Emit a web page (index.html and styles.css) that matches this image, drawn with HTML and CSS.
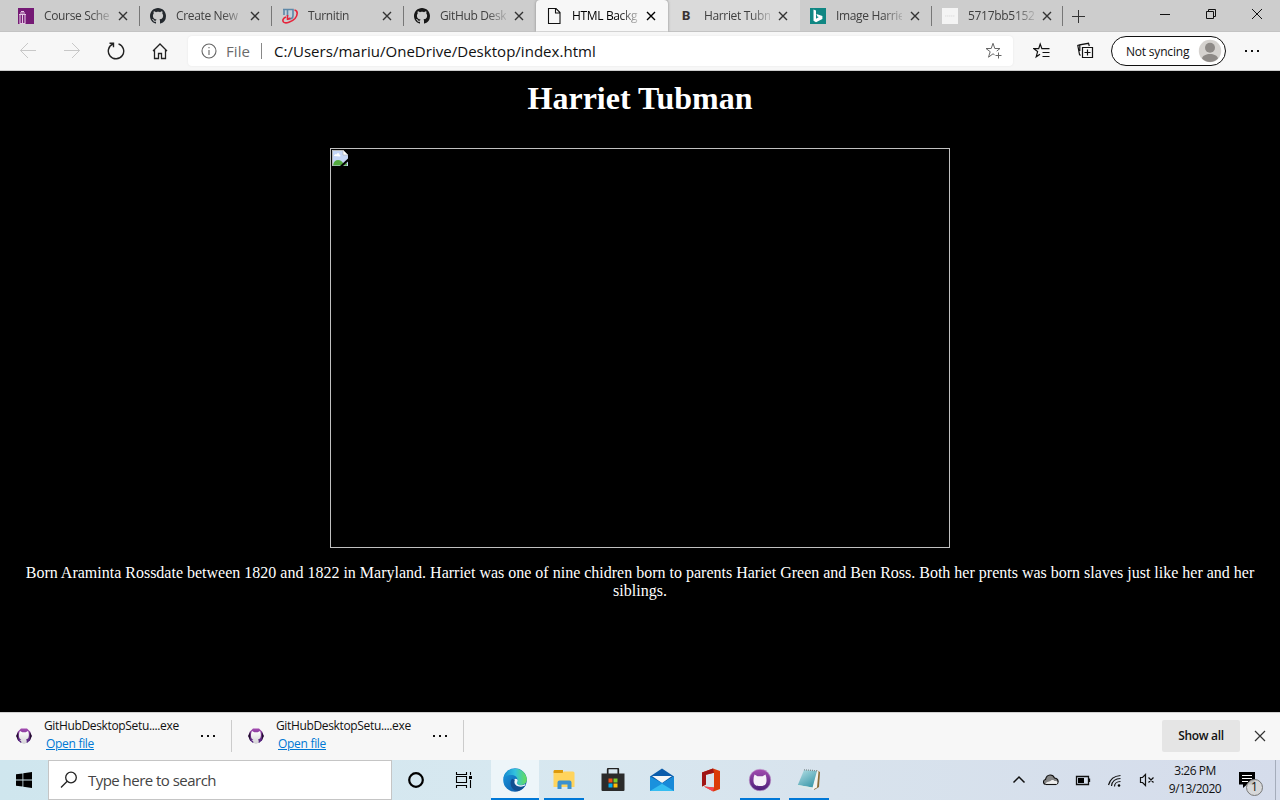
FILE: index.html
```html
<!DOCTYPE html>
<html lang="en">
<head>
<meta charset="utf-8">
<title>HTML Background</title>
<link rel="stylesheet" href="styles.css">
</head>
<body>
<svg class="defs" aria-hidden="true">
  <defs>
    <symbol id="x" viewBox="0 0 10 10"><path d="M1 1l8 8M9 1L1 9" fill="none" stroke="currentColor" stroke-width="1.4"/></symbol>
    <symbol id="octocat" viewBox="0 0 16 16"><path d="M8 0C3.58 0 0 3.58 0 8c0 3.54 2.29 6.53 5.47 7.59.4.07.55-.17.55-.38 0-.19-.01-.82-.01-1.49-2.01.37-2.53-.49-2.69-.94-.09-.23-.48-.94-.82-1.13-.28-.15-.68-.52-.01-.53.63-.01 1.08.58 1.23.82.72 1.21 1.87.87 2.33.66.07-.52.28-.87.51-1.07-1.78-.2-3.64-.89-3.64-3.95 0-.87.31-1.59.82-2.15-.08-.2-.36-1.02.08-2.12 0 0 .67-.21 2.2.82.64-.18 1.32-.27 2-.27.68 0 1.36.09 2 .27 1.53-1.04 2.2-.82 2.2-.82.44 1.1.16 1.92.08 2.12.51.56.82 1.27.82 2.15 0 3.07-1.87 3.75-3.65 3.95.29.25.54.73.54 1.48 0 1.07-.01 1.93-.01 2.2 0 .21.15.46.55.38A8.013 8.013 0 0016 8c0-4.42-3.58-8-8-8z" fill="currentColor"/></symbol>
    <symbol id="dots" viewBox="0 0 16 4"><path d="M1 1h2v2H1zM7 1h2v2H7zM13 1h2v2h-2z" fill="currentColor"/></symbol>
    <linearGradient id="purple" x1="0" y1="0" x2="0" y2="1"><stop offset="0" stop-color="#a34bb0"/><stop offset="1" stop-color="#4b1f78"/></linearGradient>
    <linearGradient id="cat" x1="0" y1="0" x2="0" y2="1"><stop offset="0" stop-color="#fff"/><stop offset="1" stop-color="#d2d0d4"/></linearGradient>
    <symbol id="desktop-app" viewBox="0 0 16 16"><path d="M5 .5h6L14 3.500 15.800 8 14 12.500 11 15H5L2 12.500.2 8 2 3.500z" fill="url(#purple)"/><path d="M.2 8L2.200 3.500v9zM15.800 8l-2-4.500v9z" fill="#24102f"/><path d="M4 3l2.300 1.300h3.400L12 3c.8 1.500 1.300 4.500.5 6.500-.4 1-1.300 1.600-2.300 1.800.4 1 .6 2 .6 3.500L8 16l-2.800-1.200v-1.500L3.500 12l1.900-.3c-1.200-.3-1.900-1.200-2.200-2.200C2.700 7.500 3 4.500 4 3z" fill="url(#cat)"/></symbol>
  </defs>
</svg>

<header class="tabs">
  <div class="tab"><svg class="fav" viewBox="0 0 16 16"><path fill="#751a75" d="M0 0h16v16H0z"/><path d="M1 6.500h7M1.500 15.500h6M2 7v8M4.500 7v8M7 7v8M2 5h5M3 3.500h3" stroke="#e4c8e4" stroke-width="1.100"/></svg><span class="label">Course Sche</span><svg class="close"><use href="#x"/></svg></div>
  <div class="tab"><svg class="fav git"><use href="#octocat"/></svg><span class="label">Create New</span><svg class="close"><use href="#x"/></svg></div>
  <div class="tab"><svg class="fav" viewBox="0 0 16 16"><path d="M2 1.500h9v6c0 2.200-1.500 3.500-4 3.500H6V7.500H2z" fill="#c3d0da"/><path d="M1 1.500h10v6c0 2.200-1.500 3.500-4 3.500M2 1.500V7M5.500 2v6" fill="none" stroke="#5d88a8" stroke-width="1.600"/><path d="M12.500 2c3.500.5 3.500 5 .5 8.500-3 3.300-9.500 5.600-11.500 3.500C0 12.300 1.500 10 4 9M5.500 7v5M5.500 11.500L8.500 10" fill="none" stroke="#e5243b" stroke-width="1.600"/></svg><span class="label">Turnitin</span><svg class="close"><use href="#x"/></svg></div>
  <div class="tab plain"><svg class="fav octo"><use href="#octocat"/></svg><span class="label">GitHub Desk</span><svg class="close"><use href="#x"/></svg></div>
  <div class="tab active"><svg class="fav" viewBox="0 0 16 16"><path d="M2.500.5h7.500l4 4v11H2.500zM9.500.5V5H14" fill="none" stroke="#111" stroke-width="1.100"/></svg><span class="label">HTML Backg</span><svg class="close"><use href="#x"/></svg></div>
  <div class="tab hover"><span class="fav bold-b">B</span><span class="label">Harriet Tubm</span><svg class="close"><use href="#x"/></svg></div>
  <div class="tab"><svg class="fav" viewBox="0 0 16 16"><path fill="#108783" d="M0 0h16v16H0z"/><path d="M3.500 1.500L6 2.500v8.200l2.800-1.600-1.500-.7-.9-2.500 6 2.200v2.800L6 14.200l-2.500-1.500z" fill="#fff"/></svg><span class="label">Image Harrie</span><svg class="close"><use href="#x"/></svg></div>
  <div class="tab last"><svg class="fav" viewBox="0 0 16 16"><path fill="#f4f4f4" d="M0 0h16v16H0z"/><path d="M3 8h10" stroke="#ddd" stroke-dasharray="1.500 .5"/></svg><span class="label digits">5717bb5152</span><svg class="close"><use href="#x"/></svg></div>
  <svg class="new-tab" viewBox="0 0 14 14"><path d="M7.500 1v13M1 7.500h13" stroke="#333"/></svg>
  <div class="window-controls">
    <svg viewBox="0 0 12 12"><path d="M1 6.500h10" stroke="#111"/></svg>
    <svg viewBox="0 0 12 12"><path d="M1.500 3.500h7v7h-7zM3.500 3V1.500h7v7H9" fill="none" stroke="#111"/></svg>
    <svg viewBox="0 0 12 12"><path d="M1 1l10 10M11 1L1 11" stroke="#111"/></svg>
  </div>
</header>

<nav class="toolbar">
  <div class="nav-buttons">
    <svg class="off" viewBox="0 0 18 18"><path d="M17 8.500H1.500M9 1L1.500 8.500 9 16"/></svg>
    <svg class="off" viewBox="0 0 18 18"><path d="M1 8.500h15.500M9 1l7.500 7.500L9 16"/></svg>
    <svg viewBox="0 0 18 18"><path d="M11.500 1.800A7.700 7.700 0 1 1 6 2L3 4.300M2.500 1.300h4v4" stroke-width="1.400"/></svg>
    <svg viewBox="0 0 18 18"><path d="M2 9l7-7 7 7M3.500 8v8.500h4v-5h3v5h4V8" stroke-width="1.300"/></svg>
  </div>
  <div class="address">
    <svg class="info" viewBox="0 0 16 16"><circle cx="8" cy="8" r="7"/><path d="M8 7v5M8 4v1.300"/></svg>
    <span class="scheme">File</span><span class="bar"></span><span class="url">C:/Users/mariu/OneDrive/Desktop/index.html</span>
    <svg class="star" viewBox="0 0 18 18"><path d="M9.500 12.700L8 11.800l-4.500 3.400 1.700-5.500L1 6.500h5.200L8 1.300l1.800 5.200H15l-3.300 2.600M13.500 10.500v6M10.500 13.500h6"/></svg>
  </div>
  <div class="actions">
    <svg viewBox="0 0 18 18"><path d="M7 12.200l-3.800 2.600 1.400-5.200-3.800-3h4.900L7.200 2l1.700 4.600h7.600M9.500 10.500h7M9.500 14.500h7"/></svg>
    <svg viewBox="0 0 18 18"><path d="M5.500 5.500h10v10h-10zM10.500 7.500v6M7.500 10.500h6M3.500 13.500L2.500 12.500.8 3.500l2-.6M2.800 9V2.800l8.700-1.500.8 2.700"/></svg>
  </div>
  <div class="profile"><span>Not syncing</span><svg viewBox="0 0 24 24"><circle cx="12" cy="12" r="11.200" fill="#d5d2cf"/><circle cx="12" cy="8.700" r="5" fill="#8e8a87"/><path d="M4 19.500c1-6 15-6 16 0a11 11 0 0 1-16 0z" fill="#8e8a87"/></svg></div>
  <svg class="menu"><use href="#dots"/></svg>
</nav>

<main class="page">
  <h1>Harriet Tubman</h1>
  <div class="picture"><svg viewBox="0 0 16 16"><path d="M0 0h11l5 5v11H0z" fill="#c4d5f5"/><path d="M.5 16V.5H11" fill="none" stroke="#b8b8b8"/><path d="M11 0l5 5h-5z" fill="#fff" stroke="#aaa" stroke-width=".6"/><path d="M2 6c0-2 2-2 2.500-1.500C5 2.500 8 3 7.500 5 9 5 8.500 6.500 8 6.500z" fill="#fff"/><path d="M1 15.500c1-7 8-7 11-1l3-1.500v2.500z" fill="#53a93f"/><path d="M8 16l8-7.500v3L11 16z" fill="#000"/></svg></div>
  <p>Born Araminta Rossdate between 1820 and 1822 in Maryland. Harriet was one of nine chidren born to parents Hariet Green and Ben Ross. Both her prents was born slaves just like her and her siblings.</p>
</main>

<section class="downloads">
  <div class="download"><svg class="app"><use href="#desktop-app"/></svg><div class="file"><span class="filename">GitHubDesktopSetu....exe</span><a>Open file</a></div><svg class="more"><use href="#dots"/></svg></div>
  <div class="download"><svg class="app"><use href="#desktop-app"/></svg><div class="file"><span class="filename">GitHubDesktopSetu....exe</span><a>Open file</a></div><svg class="more"><use href="#dots"/></svg></div>
  <span class="show-all">Show all</span>
  <svg class="dismiss" viewBox="0 0 12 12"><path d="M1 1l10 10M11 1L1 11" stroke="#333" stroke-width="1.200"/></svg>
</section>

<footer class="taskbar">
  <div class="start"><svg viewBox="0 0 16 16"><path d="M0 2.300L6.500 1.400v6.200H0zM7.300 1.300L16 0v7.600H7.300zM0 8.400h6.500v6.200L0 13.700zM7.300 8.400H16V16l-8.700-1.300z"/></svg></div>
  <div class="search"><svg viewBox="0 0 18 18"><circle cx="11" cy="6.500" r="5.300"/><path d="M7.200 10.300L1 16.500"/></svg><span>Type here to search</span></div>
  <div class="system"><svg viewBox="0 0 18 18"><circle cx="9" cy="9" r="6.800" fill="none" stroke="#000" stroke-width="2.200"/></svg></div>
  <div class="system"><svg viewBox="0 0 18 18"><path d="M1.500 1v2.500h10V1M1.500 17v-2.500h10V17M1.500 5.500h10v6h-10zM15.500 1v3M15.500 9v8" fill="none" stroke="#000" stroke-width="1.100"/><path d="M14 5h3v3h-3z"/></svg></div>
  <div class="apps">
    <div class="app-slot running current"><svg viewBox="0 0 24 24"><defs><linearGradient id="e1"><stop stop-color="#1689cf"/><stop offset=".5" stop-color="#32c2df"/><stop offset="1" stop-color="#66df55"/></linearGradient><linearGradient id="e2" x1="0" y1="0" x2="1" y2="1"><stop stop-color="#1b9de2"/><stop offset="1" stop-color="#0b4fa0"/></linearGradient></defs><circle cx="12" cy="12" r="11.800" fill="url(#e2)"/><path d="M.5 10C2-2 22-3 23.800 11c.5 6-7 7.500-9.500 5-1.100-1.200.4-1.800.3-4C14.400 6.500 6 5 .5 10z" fill="url(#e1)"/><path d="M14.700 12.500c-.2 2-1.500 2.300-.4 3.500 1.800 1.900 5.600 1.500 8.200-.3l-.7 2.100c-4 2.700-11 1.100-11.200-4 0-1.400.7-2.500 2-3.100 1.200 0 2 .8 2.100 1.800z" fill="#edf5f9"/><path d="M9 10.700c-3.500 4.500-.5 12 6 12.300 3-.8 5.300-2.500 6.800-5.200-5.500 2.500-12-.5-10-5.800z" fill="#124e91"/></svg></div>
    <div class="app-slot running"><svg viewBox="0 0 24 24"><path d="M1.500 3.500c0-1 .5-1.500 1.500-1.500h8v3H1.500z" fill="#dd9a0c"/><path d="M1.500 5h9l1-1.500H21q1.500 0 1.500 1.500v14h-21z" fill="#ffd45d"/><path d="M5.500 21v-6.500q0-2 2-2h10q2 0 2 2V21h-4v-4.500H9.500V21z" fill="#3b91cf"/></svg></div>
    <div class="app-slot"><svg viewBox="0 0 24 24"><path d="M6.700 7V1.500q0-1 1-1h8.600q1 0 1 1V7" fill="none" stroke="#222" stroke-width="1.700"/><path d="M.5 5.500h23v16.500q0 1-1 1h-21q-1 0-1-1z" fill="#2b2b2b"/><path d="M7.500 10.500H11.500V14.500h-4z" fill="#f1511b"/><path d="M12.500 10.500h4v4h-4z" fill="#80cc28"/><path d="M7.500 15.500h4v4h-4z" fill="#00adef"/><path d="M12.500 15.500h4v4h-4z" fill="#fbbc09"/></svg></div>
    <div class="app-slot"><svg viewBox="0 0 24 24"><path d="M0 8.500L12 .5l12 8V23H0z" fill="#0b5cab"/><path d="M2 8h20L12 15z" fill="#f5f6f7"/><path d="M0 8.500L12 15l12 8H0z" fill="#1a91dd"/><path d="M0 23L24 8.500V23z" fill="#35bdf1"/><path d="M12 15.700L24 8.500V23z" fill="#1889d8"/></svg></div>
    <div class="app-slot"><svg viewBox="0 0 24 24"><path d="M14 .5L3 4.500v14l4-2V6.700l8-2v14.800L5 18.500l9.500 5L21 21V3z" fill="#db3b08"/><path d="M3 4.500L14 .5 15 4.700 7 6.700v9.800l-4 2z" fill="#9f1516"/><path d="M5 18.500l10 1-1 4z" fill="#f34553"/></svg></div>
    <div class="app-slot running"><svg viewBox="0 0 24 24"><circle cx="12" cy="12" r="10.800" fill="url(#purple)" stroke="#c5a1cf" stroke-width=".6"/><path d="M6.500 6.500l3 1.800h5l3-1.800c1 2.500 1.200 5 .9 7.500-.5 3.500-3 4-6.400 4s-5.900-.5-6.400-4c-.3-2.500-.1-5 .9-7.500z" fill="#f6f1f8"/></svg></div>
    <div class="app-slot running"><svg viewBox="0 0 24 24"><defs><linearGradient id="pad" x1="0" y1="0" x2=".7" y2="1"><stop stop-color="#b7e0e6"/><stop offset="1" stop-color="#3c99aa"/></linearGradient></defs><path d="M20 2.500l3 1.500-1 15-5 3z" fill="#8b6b35"/><path d="M19.500 2.500l2 1-1.500 16-5 2.500z" fill="#f4f4ef"/><path d="M7 2L20 3 15.500 19.500.8 17z" fill="url(#pad)"/><path d="M.8 17l14.700 2.500-.5 2.500-13-3z" fill="#dce9e9"/><path d="M7 1.800L20 2.800" stroke="#7c8a8c" stroke-width="1.300" stroke-dasharray="1 1"/></svg></div>
  </div>
  <div class="tray">
    <svg viewBox="0 0 16 16"><path d="M2.500 10.500L8 5l5.500 5.500" stroke-width="1.500"/></svg>
    <svg viewBox="0 0 16 16"><path d="M3 12.500C-.5 12-.2 8 2.500 7.500 4 1.500 10 2 11.500 6c4 .2 5 5 1.500 6.500z" fill="#858585"/><path d="M2.500 12C3.500 9 7 10 8 8.500c2-1 3 0 3.500.5 3-.5 4 2 1.500 3.500H3z" fill="#eee" stroke="none"/><path d="M3 12.500h10"/></svg>
    <svg viewBox="0 0 16 16"><path d="M1.500 4.500h12v8h-12zM14.500 6.500v3.500" stroke-width="1.300"/><path d="M3 6h6v5H3z" fill="#000" stroke="none"/></svg>
    <svg viewBox="0 0 16 16"><path d="M1.500 13C3 7.500 7 4 13.500 3.500M4.500 14c.5-4.500 4-7.500 9-7.500M7.500 14.500c0-3 2.500-5 6-5" stroke-width="1.200"/><circle cx="12" cy="13.500" r="1.300" fill="#000" stroke="none"/></svg>
    <svg viewBox="0 0 16 16"><path d="M1.500 5.500v5h2l3 3v-11l-3 3zM9.500 5.500l5 5M14.500 5.500l-5 5" stroke-width="1.200"/></svg>
  </div>
  <div class="clock"><span>3:26 PM</span><span>9/13/2020</span></div>
  <div class="notice"><svg viewBox="0 0 16 16"><path d="M0 0h16v12.500H8L4 16v-3.500H0z"/><path d="M3 3.500h10M3 6.500h10M3 9.500h6" stroke="#fff"/></svg><span class="count">1</span></div>
  <div class="peek"></div>
</footer>
</body>
</html>
```
FILE: styles.css
```css
* { box-sizing: border-box; }
body { margin: 0; width: 1280px; height: 800px; overflow: hidden; display: flex; flex-direction: column; background: #000; font: 12px "Open Sans", "Noto Sans", sans-serif; color: #111; }
svg { display: block; flex: none; }
span { white-space: nowrap; }
.defs { position: absolute; width: 0; height: 0; }

.tabs { height: 32px; flex: none; display: flex; align-items: center; padding-left: 8px; background: #cdcdcd; border-bottom: 1px solid #c3c3c3; }
.tab { width: 132px; height: 32px; flex: none; display: flex; align-items: center; padding-left: 10px; color: #404040; background: linear-gradient(#777, #777) 131px 6px / 1px 20px no-repeat; }
.fav { width: 16px; height: 16px; margin-right: 10px; flex: none; }
.git { color: #24292e; }
.octo { color: #171717; }
.label { width: 66px; font-size: 12px; letter-spacing: -.35px; -webkit-mask-image: linear-gradient(90deg, #000 70%, rgba(0,0,0,.2)); mask-image: linear-gradient(90deg, #000 70%, rgba(0,0,0,.2)); }
.digits { letter-spacing: -.3px; }
.close { width: 10px; height: 10px; margin-left: 8px; color: #333; }
.tab.plain { background: none; }
.tab.last { background-position: 130px 6px; }
.tab.active { background: #f7f7f7; color: #000; border-radius: 4px 4px 0 0; box-shadow: 0 0 3px #888; clip-path: inset(0 -3px 0 -3px); }
.tab.active .close { color: #000; }
.tab.hover { height: 31px; background: #dadada; }
.bold-b { font: 800 13px/16px Roboto, sans-serif; color: #3a3335; padding-left: 4px; }
.new-tab { width: 14px; height: 14px; margin-left: 7px; }
.window-controls { display: flex; gap: 34px; margin: -4px 17px 0 auto; }
.window-controls svg { width: 12px; height: 12px; }

.toolbar { height: 39px; flex: none; display: flex; align-items: center; background: #f7f7f7; border-bottom: 1px solid #ccc; }
.nav-buttons { width: 188px; display: flex; gap: 26px; padding-left: 19px; }
.nav-buttons svg { width: 18px; height: 18px; fill: none; stroke: #222; }
.nav-buttons .off { stroke: #c8c8c8; }
.address { width: 825px; height: 30px; display: flex; align-items: center; background: #fff; border-radius: 4px; box-shadow: 0 0 2px #e4e4e4; padding: 0 10px 0 13px; font-size: 15px; }
.info { width: 16px; height: 16px; fill: none; stroke: #666; stroke-width: 1.1; }
.scheme { width: 24px; margin-left: 9px; color: #6b6b6b; letter-spacing: .05px; }
.bar { width: 1px; height: 16px; margin: 0 12px 0 11px; background: #888; }
.url { letter-spacing: .03px; }
.star { width: 18px; height: 18px; margin-left: auto; fill: none; stroke: #666; }
.actions { display: flex; gap: 26px; margin-left: 20px; }
.actions svg { width: 18px; height: 18px; fill: none; stroke: #111; stroke-width: 1.2; }
.profile { width: 115px; height: 30px; margin-left: 16px; padding: 0 3px 0 14px; display: flex; align-items: center; justify-content: space-between; border: 1px solid #111; border-radius: 15px; letter-spacing: -.2px; background: #fff; }
.profile svg { width: 24px; height: 24px; }
.menu { width: 16px; height: 4px; margin-left: 18px; }

.page { height: 641px; flex: none; padding: 9px 8px 0; background: #000; color: #fff; font: 16px/18px "Liberation Serif", serif; text-align: center; }
.page h1 { margin: 0; font-size: 32px; line-height: 36px; }
.picture { width: 620px; height: 400px; margin: 32px auto 16px; border: 1px solid #c0c0c0; padding: 1px; }
.picture svg { width: 16px; height: 16px; }
.page p { margin: 0; }

.downloads { height: 48px; flex: none; display: flex; align-items: center; padding-bottom: 1px; background: #f7f7f7; border-top: 1px solid #d0d0d0; }
.download { width: 232px; height: 32px; display: flex; align-items: center; padding-left: 16px; border-right: 1px solid #ccc; }
.app { width: 16px; height: 16px; }
.file { width: 156px; margin: -2px 0 0 12px; display: flex; flex-direction: column; line-height: 18px; }
.filename { letter-spacing: -.35px; }
.file a { margin-left: 2px; color: #0078d4; text-decoration: underline; letter-spacing: -.3px; }
.more { width: 16px; height: 4px; }
.show-all { width: 78px; height: 32px; margin-left: auto; background: #e5e5e5; border-radius: 2px; text-align: center; line-height: 31px; font-weight: 600; letter-spacing: -.3px; }
.dismiss { width: 12px; height: 12px; margin: 0 14px; }

.taskbar { height: 40px; flex: none; display: flex; background: linear-gradient(90deg, #cfe6ee, #d7e8f0 40%, #d8e3ed 65%, #d5dceb); }
.start, .system { width: 48px; display: flex; align-items: center; justify-content: center; }
.start svg { width: 16px; height: 16px; }
.search { width: 344px; height: 40px; display: flex; align-items: center; gap: 10px; padding-left: 11px; background: #fff; border: 1px solid #c5c5c5; font-size: 15px; letter-spacing: -.53px; color: #444; }
.search svg { width: 18px; height: 18px; fill: none; stroke: #222; stroke-width: 1.3; }
.system svg { width: 18px; height: 18px; }
.apps { display: flex; gap: 1px; margin-left: 3px; }
.app-slot { width: 48px; height: 40px; display: flex; align-items: center; justify-content: center; }
.app-slot svg { width: 24px; height: 24px; }
.running { background: linear-gradient(#0078d7, #0078d7) 50% 100% / 40px 2px no-repeat; }
.current { background: linear-gradient(#0078d7, #0078d7) 0 100% / 48px 2px no-repeat #edf5f9; }
.tray { display: flex; align-items: center; gap: 16px; margin-left: auto; }
.tray svg { width: 16px; height: 16px; fill: none; stroke: #111; stroke-width: 1.1; }
.clock { width: 68px; margin-left: 6px; display: flex; flex-direction: column; align-items: center; padding-top: 2px; line-height: 18px; letter-spacing: -.5px; }
.notice { position: relative; width: 46px; padding: 12px 0 0 10px; }
.notice svg { width: 16px; height: 16px; }
.count { position: absolute; left: 17px; top: 19px; width: 17px; height: 17px; border: 1px solid #777; border-radius: 50%; background: rgba(215,215,215,.9); font-size: 12px; line-height: 14px; text-align: center; }
.peek { width: 5px; border-left: 1px solid #a5adbb; }
```
